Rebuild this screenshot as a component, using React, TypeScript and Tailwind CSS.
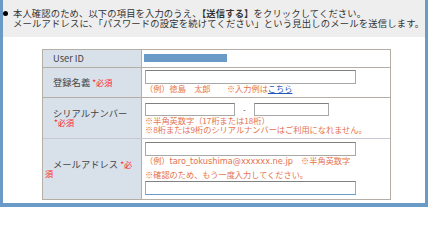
const note = "text-[8.2px] leading-[9px] text-[#e4724e] whitespace-nowrap";
const req = "text-[8.2px] text-[#ff2a2a]";
const field = "block bg-white border border-[#a8a8a8] border-t-[#808080]";
const spread = "block whitespace-nowrap text-justify [text-align-last:justify]";

export default function App() {
  return (
    <div className="w-[428px] h-[207px] bg-[#6a9bc6] px-[3px] pb-[4px] font-['Noto_Sans_CJK_JP',sans-serif] text-[#333]">
      <div className="h-full bg-white flex flex-col">
        {/* 案内文 */}
        <div className="h-[37px] flex-none bg-[#eeeeee] flex pt-[8px] text-[9.3px] leading-[10px]">
          <span className="w-[10px] flex-none pt-[3px]">
            <span className="block w-[5px] h-[5px] rounded-full bg-black" />
          </span>
          <div>
            <p className={`${spread} w-[353px]`}>本人確認のため、以下の項目を入力のうえ、<b>【送信する】</b>をクリックしてください。</p>
            <p className={`${spread} w-[411px]`}>メールアドレスに、「パスワードの設定を続けてください」という見出しのメールを送信します。</p>
          </div>
        </div>

        {/* 入力フォーム */}
        <div className="ml-[39px] mt-[12px] w-[349px] border border-[#b5aea6] text-[9.3px] text-[#444]">
          <div className="flex h-[18px] border-b border-[#b5aea6]">
            <div className="w-[99px] flex-none border-r border-[#b5aea6] bg-[#d8e0ea] flex items-center pl-[10px]">User ID</div>
            <div className="flex-1 pl-[2px] pt-[4px]">
              <div className="w-[83px] h-[8px] bg-[#6a9bc6]" />
            </div>
          </div>

          <div className="flex h-[30px] border-b border-[#b5aea6]">
            <div className="w-[99px] flex-none border-r border-[#b5aea6] bg-[#d8e0ea] flex items-center pl-[10px] whitespace-nowrap">
              登録名義&nbsp;<span className={req}>*必須</span>
            </div>
            <div className="flex-1 pl-[3px] pt-[2px]">
              <input className={`${field} w-[211px] h-[14px]`} />
              <p className={note}>
                （例）徳島　太郎　　※入力例は<a className="text-[#2457b8] underline">こちら</a>
              </p>
            </div>
          </div>

          <div className="flex h-[41px] border-b border-[#c9c6d6]">
            <div className="w-[99px] flex-none border-r border-[#b5aea6] bg-[#d8e0ea] flex flex-col justify-center pl-[10px] leading-[9px] whitespace-nowrap">
              <span>シリアルナンバー</span>
              <span className={`${req} pl-[1px]`}>*必須</span>
            </div>
            <div className="flex-1 pl-[3px] pt-[5px]">
              <div className="flex items-center">
                <input className={`${field} w-[90px] h-[13px]`} />
                <span className="w-[19px] text-center text-[8px] leading-[13px]">-</span>
                <input className={`${field} w-[75px] h-[13px]`} />
              </div>
              <p className={note}>※半角英数字（17桁または18桁）</p>
              <p className={note}>※8桁または9桁のシリアルナンバーはご利用になれません。</p>
            </div>
          </div>

          <div className="flex h-[60px]">
            <div className="w-[99px] flex-none border-r border-[#b5aea6] bg-[#d8e0ea] flex flex-col justify-center pl-[2px] leading-[9px] whitespace-nowrap">
              <span className="pl-[8px]">
                メールアドレス&nbsp;<span className={req}>*必</span>
              </span>
              <span className={req}>須</span>
            </div>
            <div className="flex-1 pl-[3px] pt-[3px]">
              <input className={`${field} w-[211px] h-[14px]`} />
              <p className={note}>
                （例）<span className="font-['DejaVu_Sans',sans-serif] text-[8.2px]">taro_tokushima@xxxxxx.ne.jp</span>　※半角英数字
              </p>
              <p className={`${note} mt-[3.5px]`}>※確認のため、もう一度入力してください。</p>
              <input className={`${field} w-[211px] h-[14px] mt-[2.5px] border-b-[#6a9bc6]`} />
            </div>
          </div>
        </div>
      </div>
    </div>
  );
}
